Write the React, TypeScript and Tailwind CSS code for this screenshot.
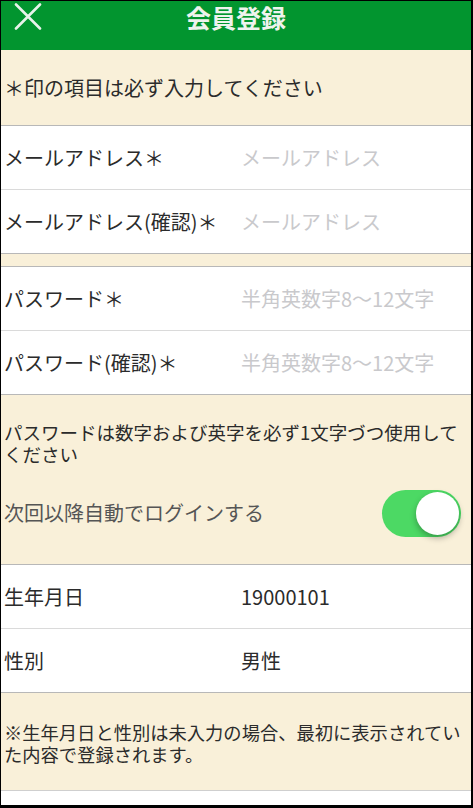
import React from "react";

const font = { fontFamily: '"Noto Sans CJK JP", "Noto Sans", sans-serif' };

function Row({ label, value, placeholder, last }: { label: string; value?: string; placeholder?: string; last?: boolean }) {
  return (
    <div className={`flex h-[64px] items-center bg-white border-b ${last ? "border-[#b8b8b8]" : "border-[#dadada]"}`}>
      <div className="w-[236px] pl-[3px] text-[20px] text-[#2b2b2b] whitespace-nowrap">{label}</div>
      {value ? (
        <div className="pl-[4px] text-[20px] text-[#2b2b2b]">{value}</div>
      ) : (
        <div className="pl-[4px] text-[20px] text-[#c9c9cc]">{placeholder}</div>
      )}
    </div>
  );
}

export default function App() {
  return (
    <div className="w-[473px] h-[808px] bg-black pt-[1px] pl-[1px] pr-[2px] pb-[3px]" style={font}>
      <div className="flex h-full flex-col bg-white overflow-hidden">
        {/* Header */}
        <div className="relative flex h-[49px] shrink-0 items-start justify-center bg-[#02952f]">
          <svg className="absolute left-[13px] top-[2px]" width="28" height="27" viewBox="0 0 28 27">
            <path d="M2 1.5 L26 25.5 M26 1.5 L2 25.5" stroke="#e8f3ea" strokeWidth="2.6" strokeLinecap="round" />
          </svg>
          <div className="text-[25px] font-bold leading-[32px] text-[#eef3ee]">会員登録</div>
        </div>

        {/* Notice */}
        <div className="flex h-[76px] shrink-0 items-center border-b border-[#b8b8b8] bg-[#f9f0d9] pl-[3px] text-[20px] text-[#2b2b2b]">
          ＊印の項目は必ず入力してください
        </div>

        <Row label="メールアドレス＊" placeholder="メールアドレス" />
        <Row label="メールアドレス(確認)＊" placeholder="メールアドレス" last />

        <div className="h-[13px] shrink-0 border-b border-[#b8b8b8] bg-[#f9f0d9]" />

        <Row label="パスワード＊" placeholder="半角英数字8〜12文字" />
        <Row label="パスワード(確認)＊" placeholder="半角英数字8〜12文字" last />

        {/* Password note + toggle */}
        <div className="flex h-[170px] shrink-0 flex-col border-b border-[#b8b8b8] bg-[#f9f0d9] pt-[26px]">
          <div className="pl-[3px] text-[18.5px] leading-[22px] text-[#2b2b2b]">
            パスワードは数字および英字を必ず1文字づつ使用してください
          </div>
          <div className="mt-[24px] flex h-[48px] items-center justify-between pr-[10px]">
            <div className="pl-[3px] text-[20px] text-[#555555]">次回以降自動でログインする</div>
            <div className="relative h-[47px] w-[79px] rounded-full bg-[#4cd964]">
              <div className="absolute right-[2px] top-[2px] h-[43px] w-[43px] rounded-full bg-white shadow-[0_3px_6px_rgba(0,0,0,0.3)]" />
            </div>
          </div>
        </div>

        <Row label="生年月日" value="19000101" />
        <Row label="性別" value="男性" last />

        <div className="h-[98px] shrink-0 border-b border-[#cfcfcf] bg-[#f9f0d9] pt-[28px] pl-[3px] text-[18.3px] leading-[22px] text-[#2b2b2b]">
          ※生年月日と性別は未入力の場合、最初に表示されていた内容で登録されます。
        </div>

        <div className="flex-1 bg-white" />
      </div>
    </div>
  );
}
